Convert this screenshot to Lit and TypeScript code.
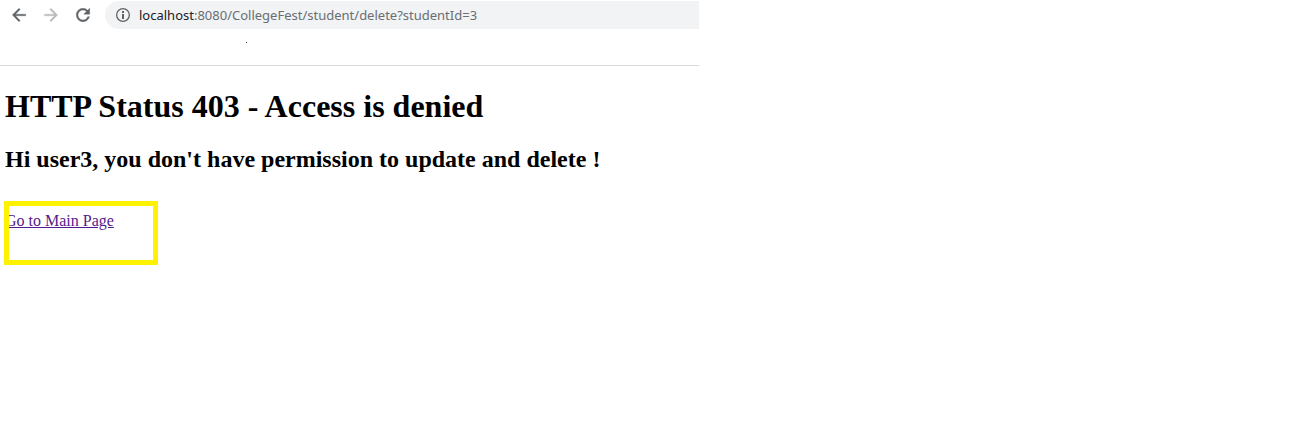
import { LitElement, html, css } from "lit";
import { customElement, property } from "lit/decorators.js";

@customElement("browser-bar")
class BrowserBar extends LitElement {
  @property() host = "";
  @property() path = "";

  static styles = css`
    :host {
      display: block;
      border-bottom: 1px solid #dadada;
      font-family: "Noto Sans", "Open Sans", sans-serif;
    }
    .toolbar {
      display: flex;
      align-items: center;
      padding: 1px 0 0 9px;
    }
    button {
      display: flex;
      flex: none;
      padding: 0;
      border: 0;
      background: none;
      color: #5f6368;
    }
    svg {
      display: block;
      fill: currentColor;
    }
    .nav {
      display: flex;
      gap: 12px;
    }
    .nav button:disabled {
      color: #bababa;
    }
    .address {
      display: flex;
      flex: 1;
      align-items: center;
      min-width: 0;
      height: 28px;
      margin-left: 12px;
      padding-left: 10px;
      border-radius: 14px 0 0 14px;
      background: #f1f3f4;
      font-size: 13px;
      line-height: 20px;
    }
    .info {
      margin-right: 8px;
    }
    label {
      color: #202124;
    }
    input {
      flex: 1;
      min-width: 0;
      padding: 0;
      border: 0;
      outline: 0;
      background: none;
      color: #6a6e73;
      font: inherit;
    }
    .bookmarks {
      display: flex;
      height: 36px;
      padding: 13px 0 0 246px;
      box-sizing: border-box;
    }
    .mark {
      width: 1px;
      height: 1px;
      background: #6b2a7a;
    }
  `;

  render() {
    return html`
      <div class="toolbar">
        <div class="nav">
          <button aria-label="Back">
            <svg width="20" height="20" viewBox="0 0 24 24">
              <path d="M20 11H7.83l5.59-5.59L12 4l-8 8 8 8 1.41-1.41L7.83 13H20z" stroke="currentColor" stroke-width=".4" />
            </svg>
          </button>
          <button aria-label="Forward" disabled>
            <svg width="20" height="20" viewBox="0 0 24 24">
              <path d="M12 4l-1.41 1.41L16.17 11H4v2h12.17l-5.58 5.59L12 20l8-8z" stroke="currentColor" stroke-width=".4" />
            </svg>
          </button>
          <button aria-label="Reload">
            <svg width="20" height="20" viewBox="0 0 24 24">
              <path d="M17.65 6.35C16.2 4.9 14.21 4 12 4c-4.42 0-7.99 3.58-7.99 8s3.57 8 7.99 8c3.73 0 6.84-2.55 7.73-6h-2.08c-.82 2.33-3.04 4-5.65 4-3.31 0-6-2.69-6-6s2.69-6 6-6c1.66 0 3.14.69 4.22 1.78L13 11h7V4l-2.35 2.35z" stroke="currentColor" stroke-width=".5" />
            </svg>
          </button>
        </div>
        <div class="address">
          <button class="info" aria-label="View site information">
            <svg width="16" height="16" viewBox="0 0 16 16">
              <circle cx="8" cy="8" r="6.35" fill="none" stroke="currentColor" stroke-width="1.3" />
              <path d="M7 4h2v2H7zM7 7h2v5H7z" />
            </svg>
          </button>
          <label for="url">${this.host}</label>
          <input id="url" type="text" spellcheck="false" .value=${this.path} />
        </div>
      </div>
      <div class="bookmarks"><span class="mark"></span></div>
    `;
  }
}

@customElement("app-root")
class AppRoot extends LitElement {
  static styles = css`
    :host {
      display: block;
      min-height: 100vh;
      background: #fff;
      color: #000;
      font-family: "Liberation Serif", "Times New Roman", serif;
      font-size: 16px;
    }
    .window {
      max-width: 699px;
    }
    main {
      padding: 21px 5px 0;
    }
    h1 {
      margin: 0;
      font-size: 32px;
      line-height: 38px;
    }
    h2 {
      margin: 21px 0 0;
      font-size: 24px;
      line-height: 27px;
    }
    .action {
      position: relative;
      margin-top: 38px;
      line-height: 19px;
    }
    a {
      color: #551a8b;
    }
    .highlight {
      position: absolute;
      top: -10px;
      left: -1px;
      box-sizing: border-box;
      width: 154px;
      height: 64px;
      border: 5px solid #fff200;
      pointer-events: none;
    }
  `;

  render() {
    return html`
      <div class="window">
        <browser-bar
          host="localhost"
          path=":8080/CollegeFest/student/delete?studentId=3"
        ></browser-bar>
        <main>
          <h1>HTTP Status 403 - Access is denied</h1>
          <h2>Hi user3, you don't have permission to update and delete !</h2>
          <div class="action">
            <a href="#">Go to Main Page</a>
            <span class="highlight"></span>
          </div>
        </main>
      </div>
    `;
  }
}
